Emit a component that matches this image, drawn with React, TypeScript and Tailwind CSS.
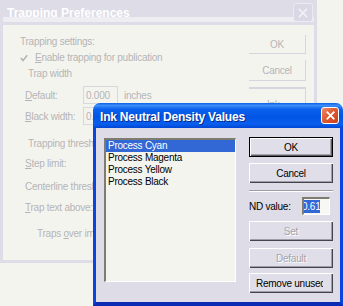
import React from "react";

function XIcon({ color = "#fff", w = 2, size = 10 }: { color?: string; w?: number; size?: number }) {
  return (
    <svg width={size} height={size} viewBox="0 0 10 10">
      <path d="M1.5 1.5 L8.5 8.5 M8.5 1.5 L1.5 8.5" stroke={color} strokeWidth={w} strokeLinecap="square" fill="none" />
    </svg>
  );
}

function FrontButton({ children, def, disabled }: { children: React.ReactNode; def?: boolean; disabled?: boolean }) {
  const base = "h-[20px] w-[84px] flex items-center justify-center bg-[#e0dfe9] overflow-hidden whitespace-nowrap";
  const edge = def
    ? "border border-black shadow-[inset_1px_1px_0_#fff,inset_-1px_-1px_0_#5c5b64,inset_-2px_-2px_0_#a2a1ac]"
    : "shadow-[inset_1px_1px_0_#fff,inset_-1px_-1px_0_#45444c,inset_-2px_-2px_0_#9e9da8]";
  const txt = disabled ? "text-[#a3a2ad] [text-shadow:1px_1px_0_#fff]" : "text-black";
  return <div className={`${base} ${edge} ${txt}`}>{children}</div>;
}

export default function App() {
  return (
    <div className="relative w-[343px] h-[306px] overflow-hidden bg-[#f4f4ef] font-['Liberation_Sans',Arial,sans-serif] text-[10px] leading-[13px] tracking-[-0.25px]">
      {/* Background window: Trapping Preferences (faded) */}
      <div className="absolute left-0 top-0 w-[317px] h-[263px] flex flex-col border-x-[3px] border-b-[3px] border-[#dddce7]">
        <div className="relative h-[17px] bg-[#dddce7] overflow-hidden">
          <span className="absolute left-[4px] top-[6px] text-[12px] leading-[14px] font-bold tracking-[0px] text-white whitespace-nowrap">
            Trapping Preferences
          </span>
        </div>
        <div className="h-[5px] bg-[#eeeef2]" />
        <div className="h-[3px] bg-[#dddce7]" />
        <div className="flex-1 flex bg-[#f4f4ef] text-[#b4b4b6]">
          <div className="flex-1 flex flex-col pl-[17px] pt-[10px] whitespace-nowrap">
            <div className="h-[13px]">Trapping settings:</div>
            <div className="h-[13px] mt-[3px] flex items-center">
              <svg width="8" height="8" viewBox="0 0 8 8" className="mr-[7px]">
                <path d="M0.8 4 L3 6.4 L7.2 1.2" stroke="#b4b4b6" strokeWidth="1.6" fill="none" />
              </svg>
              <span>
                <u>E</u>nable trapping for publication
              </span>
            </div>
            <div className="h-[13px] mt-[3px] ml-[8px]">Trap width</div>
            <div className="h-[18px] mt-[6px] ml-[5px] flex items-center">
              <span className="w-[58px]">
                <u>D</u>efault:
              </span>
              <div className="w-[35px] h-[18px] border border-[#d8d7e0] flex items-center pl-[2px]">0.000</div>
              <span className="ml-[6px]">inches</span>
            </div>
            <div className="h-[18px] mt-[3px] ml-[5px] flex items-center">
              <span className="w-[58px]">
                <u>B</u>lack width:
              </span>
              <div className="w-[35px] h-[18px] border border-[#d8d7e0] flex items-center pl-[2px]">0.000</div>
            </div>
            <div className="h-[13px] mt-[12px] ml-[8px]">Trapping thresholds</div>
            <div className="h-[13px] mt-[7px] ml-[5px]">
              <u>S</u>tep limit:
            </div>
            <div className="h-[13px] mt-[10px] ml-[5px]">Centerline threshold:</div>
            <div className="h-[13px] mt-[8px] ml-[5px]">
              <u>T</u>rap text above:
            </div>
            <div className="h-[13px] mt-[13px] ml-[17px]">
              Traps <u>o</u>ver imported objects
            </div>
          </div>
          <div className="w-[57px] mr-[8px] pt-[10px] flex flex-col">
            <div className="h-[19px] border-r border-b border-[#d6d5e0] flex items-center justify-center">OK</div>
            <div className="h-[21px] mt-[6px] border-r border-b border-[#d6d5e0] flex items-center justify-center">Cancel</div>
            <div className="h-[20px] mt-[6px] border-t-2 border-r border-[#d6d5e0] flex justify-center pt-[9px]">Ink...</div>
          </div>
        </div>
        <div className="absolute right-[1px] top-[3px] w-[20px] h-[19px] rounded-[3px] border border-[#ecebf2] bg-[#d9d8e4] flex items-center justify-center">
          <XIcon color="#f2f2f6" w={1.6} size={10} />
        </div>
      </div>

      {/* Front window: Ink Neutral Density Values */}
      <div className="absolute left-[93px] top-[103px] w-[250px] h-[203px] flex flex-col">
        <div className="relative h-[25px] rounded-t-[7px] bg-[linear-gradient(180deg,#0a5fe6_0%,#3d8ef9_10%,#0b62ec_24%,#0055e5_55%,#0a5fee_84%,#0046d2_100%)] flex items-center pl-[7px] pt-[2px]">
          <span className="text-white font-bold text-[12px] leading-[14px] tracking-[-0.2px] [text-shadow:1px_1px_0_#0a2a8a] whitespace-nowrap">
            Ink Neutral Density Values
          </span>
          <div className="absolute right-[4px] top-[4px] w-[18px] h-[17px] rounded-[3px] border border-white bg-[linear-gradient(135deg,#f08a64_0%,#e05a32_45%,#c8401c_100%)] flex items-center justify-center">
            <XIcon color="#fff" w={2} size={9} />
          </div>
        </div>
        <div className="flex-1 flex bg-[#dddce7] border-l-[3px] border-r-[3px] border-b-[4px] border-l-[#0b45e0] border-r-[#0b45e0] border-b-[#0a2cb4]">
          <div className="pl-[8px] pt-[10px]">
            <div className="w-[132px] h-[144px] bg-[#f4f4ef] border-t-2 border-l-2 border-r border-b border-t-[#7e7b70] border-l-[#7e7b70] border-r-white border-b-white text-black whitespace-nowrap">
              <div className="h-[12px] leading-[12px] bg-[#3168d5] text-white pl-[2px]">Process Cyan</div>
              <div className="h-[12px] leading-[12px] pl-[2px]">Process Magenta</div>
              <div className="h-[12px] leading-[12px] pl-[2px]">Process Yellow</div>
              <div className="h-[12px] leading-[12px] pl-[2px]">Process Black</div>
            </div>
          </div>
          <div className="ml-[13px] pt-[9px] flex flex-col w-[84px]">
            <FrontButton def>OK</FrontButton>
            <div className="mt-[6px]">
              <FrontButton>Cancel</FrontButton>
            </div>
            <div className="mt-[7px] h-[2px] border-t border-b border-t-[#9c9ba6] border-b-white" />
            <div className="mt-[5px] h-[18px] flex items-center text-black">
              <span className="w-[53px] whitespace-nowrap">ND value:</span>
              <div className="w-[28px] h-[18px] bg-[#f7f7f4] border-t-2 border-l-2 border-r border-b border-t-[#7e7b70] border-l-[#7e7b70] border-r-white border-b-white overflow-hidden flex items-center">
                <span className="ml-[-2px] bg-[#3168d5] text-white leading-[13px] whitespace-nowrap">0.61</span>
              </div>
            </div>
            <div className="mt-[6px]">
              <FrontButton disabled>Set</FrontButton>
            </div>
            <div className="mt-[7px]">
              <FrontButton disabled>Default</FrontButton>
            </div>
            <div className="mt-[5px]">
              <div className="h-[20px] w-[84px] flex items-center pl-[7px] bg-[#e0dfe9] overflow-hidden whitespace-nowrap shadow-[inset_1px_1px_0_#fff,inset_-1px_-1px_0_#45444c,inset_-2px_-2px_0_#9e9da8] text-black">
                <span className="overflow-hidden w-[67px]">Remove unused</span>
              </div>
            </div>
          </div>
        </div>
      </div>
    </div>
  );
}
